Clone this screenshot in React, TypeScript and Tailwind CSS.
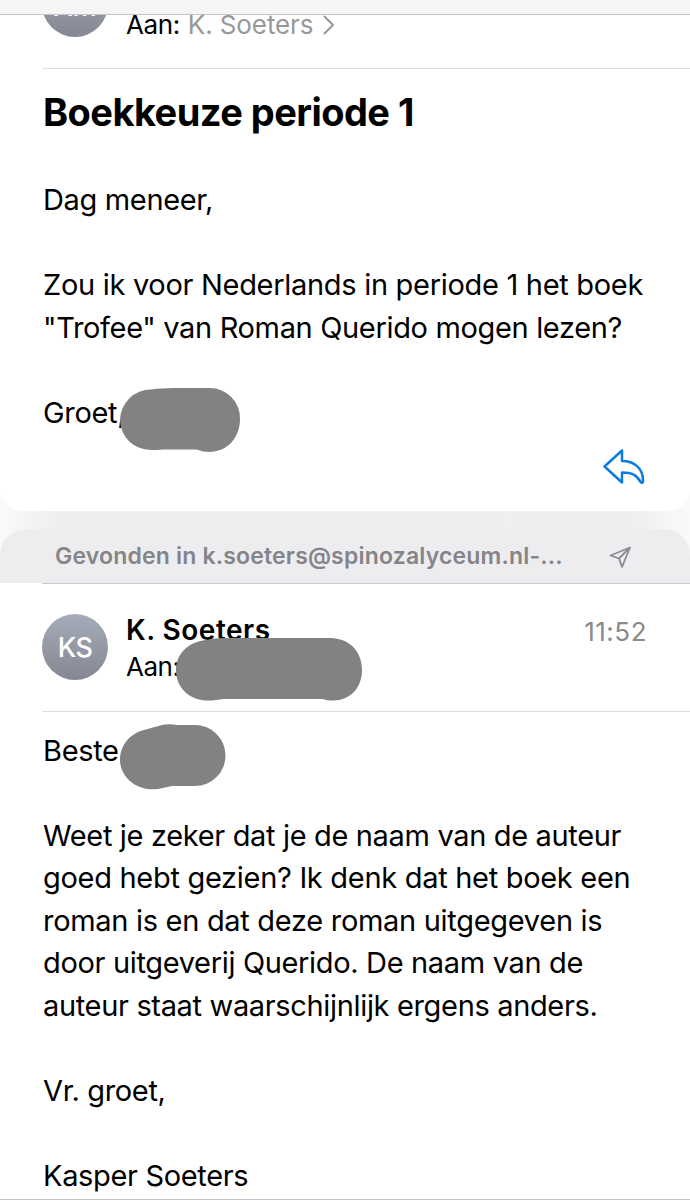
import type { ReactNode } from "react";

function Avatar({ initials, className = "pt-[3px]" }: { initials: string; className?: string }) {
  return (
    <div className={"flex h-[66px] w-[66px] shrink-0 items-center justify-center rounded-full bg-linear-to-b from-[#a5abb9] to-[#858892] text-[27px] font-medium tracking-[-0.5px] text-white " + className}>
      {initials}
    </div>
  );
}

// Marker stroke that hides a name
function Redaction({ path, className }: { path: string; className: string }) {
  return (
    <svg className={"absolute overflow-visible " + className} fill="#828282">
      <path d={path} />
    </svg>
  );
}

function Line({ children, className = "" }: { children?: ReactNode; className?: string }) {
  return <div className={"h-[42.5px] whitespace-nowrap " + className}>{children}</div>;
}

function FirstMail() {
  return (
    <section className="relative flex h-[496px] flex-col overflow-hidden rounded-b-[22px] bg-white">
      <div className="ml-[42px] flex h-[54px] border-b border-[#dcdcde]">
        <div className="-mt-[44px]">
          <Avatar initials="AM" className="pt-[7px]" />
        </div>
        <div className="ml-[18px] flex h-5 items-center gap-2 text-[26px] leading-5">
          <span className="tracking-[-0.4px]">Aan:</span>
          <span className="tracking-[-0.1px] text-[#98989a]">K. Soeters</span>
          <svg className="ml-0.5 h-5 w-3" viewBox="0 0 12 20" fill="none" stroke="#98989a" strokeWidth="2">
            <path d="M1.5 1.5 10 10 1.5 18.5" strokeLinecap="round" strokeLinejoin="round" />
          </svg>
        </div>
      </div>
      <h1 className="ml-[43px] mt-[18px] h-[50px] text-[38px] font-bold leading-[50px] tracking-[-0.55px]">
        Boekkeuze periode 1
      </h1>
      <div className="ml-[43px] mt-[42px] text-[29px] leading-[42.5px] tracking-[-0.34px]">
        <Line>Dag meneer,</Line>
        <Line />
        <Line className="tracking-[-0.3px]">Zou ik voor Nederlands in periode 1 het boek</Line>
        <Line>"Trofee" van Roman Querido mogen lezen?</Line>
        <Line />
        <Line className="relative">
          Groet,
          <Redaction
            className="left-[77px] top-[-4px] h-[66px] w-[120px]"
            path="M31 1.5Q43 0 52 0H90A30 30 0 0 1 120 31C120 50 107 64 89 64Q83 64 77 61.5H43Q37 62 31 62A30.5 30.5 0 0 1 0 32A31 31 0 0 1 31 1.5Z"
          />
        </Line>
      </div>
      <button className="absolute right-[44px] top-[433px]" aria-label="Beantwoorden">
        <svg className="h-[38px] w-[44px]" viewBox="0 0 44 38" fill="none" stroke="#0a7be0" strokeWidth="2.5" strokeLinejoin="round">
          <path d="M20 2.5 2.5 18.5 20 34.5V24.5C30 24.5 35 27 38.5 34Q41 36 41 32.5C41 20 32 13 20 13Z" />
        </svg>
      </button>
    </section>
  );
}

function SecondMail() {
  return (
    <section className="relative mt-[18px] h-[671px] overflow-hidden rounded-t-[26px] bg-white">
      <div className="flex h-[54px] items-center bg-[#ededf0] pl-[55px] pt-px">
        <span className="w-[554px] shrink-0 whitespace-nowrap text-[23px] font-semibold tracking-[0.18px] text-[#858589]">
          Gevonden in k.soeters@spinozalyceum.nl-...
        </span>
        <svg className="h-6 w-6 shrink-0" viewBox="0 0 24 24" fill="none" stroke="#8c8c90" strokeWidth="1.8" strokeLinejoin="round">
          <path d="M21 2.5 1.5 10.5 10 13.5 13 22Z M21 2.5 10 13.5" />
        </svg>
      </div>
      <header className="relative ml-[42px] flex h-[129px] border-b border-t border-t-[#c9c9cd] border-b-[#dcdcde]">
        <div className="mt-[30px]">
          <Avatar initials="KS" />
        </div>
        <div className="ml-[18px] mt-[28px]">
          <div className="h-9 text-[28px] font-semibold leading-9 tracking-[0.5px]">K. Soeters</div>
          <div className="mt-px h-9 text-[26px] leading-9 tracking-[-0.5px]">Aan:</div>
        </div>
        <time className="ml-auto mr-[43px] mt-[30px] h-9 text-[26px] leading-9 tracking-[0.5px] text-[#89898d]">11:52</time>
        <Redaction
          className="left-[134px] top-[54px] h-[64px] w-[186px]"
          path="M30 2Q38 0 48 0H154C174 0 186 14 186 32C186 50 174 62.5 157 62.5Q151 62.5 146 61H48L36 62.5C14 64 0 50 0 32C0 16 12 4 30 2Z"
        />
      </header>
      <div className="ml-[43px] mt-[17.5px] text-[29px] leading-[42.5px] tracking-[-0.34px]">
        <Line className="relative">
          Beste
          <Redaction
            className="left-[77px] top-[-6px] h-[66px] w-[106px]"
            path="M24 6 42 1Q49 -0.5 57 1H75A30.5 30.5 0 0 1 75 62H52L38 65C16 68 0 52 0 36C0 22 9 10 24 6Z"
          />
        </Line>
        <Line />
        <Line>Weet je zeker dat je de naam van de auteur</Line>
        <Line className="tracking-[-0.3px]">goed hebt gezien? Ik denk dat het boek een</Line>
        <Line className="tracking-[-0.3px]">roman is en dat deze roman uitgegeven is</Line>
        <Line>door uitgeverij Querido. De naam van de</Line>
        <Line>auteur staat waarschijnlijk ergens anders.</Line>
        <Line />
        <Line>Vr. groet,</Line>
        <Line />
        <Line>Kasper Soeters</Line>
      </div>
    </section>
  );
}

export default function App() {
  return (
    <main className="relative h-[1200px] w-[690px] overflow-hidden bg-linear-to-r from-[#fafafa] via-[#efefef] via-8% to-[#efefef] font-['Inter',sans-serif] text-black">
      <div className="bg-linear-to-l from-[#fafafa] to-transparent to-8%">
        <div className="h-[15px] border-b border-[#c4c4c6] bg-[#f5f5f5]" />
        <FirstMail />
        <SecondMail />
      </div>
      <div className="absolute bottom-0 left-0 h-px w-full bg-[#c4c4c6]" />
    </main>
  );
}
